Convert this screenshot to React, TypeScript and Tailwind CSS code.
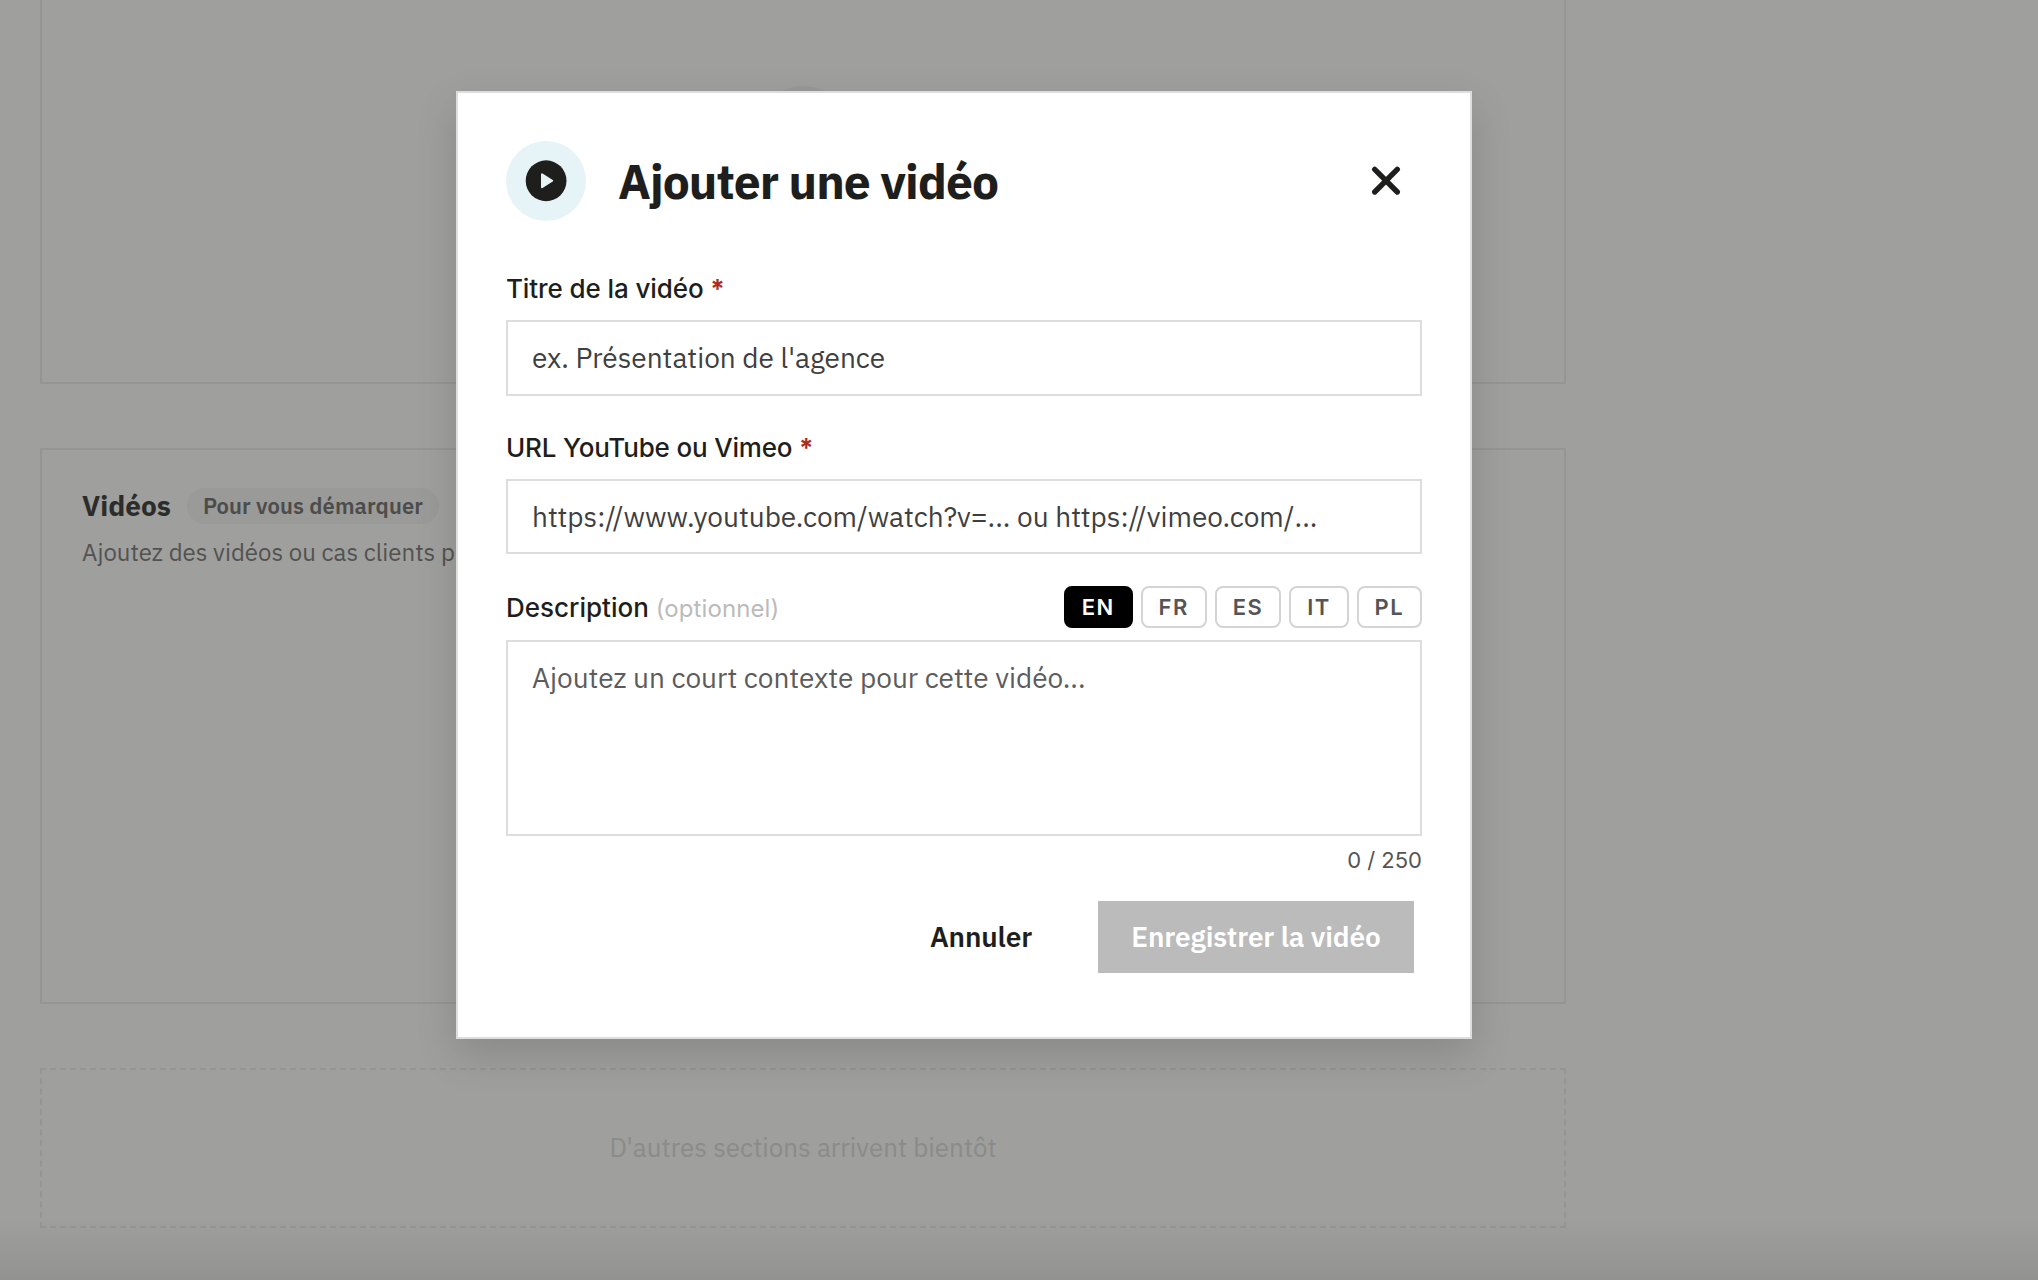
import React, { useState } from "react";

const languages = ["EN", "FR", "ES", "IT", "PL"];

const MAX_LENGTH = 250;

const PlayIcon = () => (
  <svg width="48" height="48" viewBox="0 0 48 48" aria-hidden="true">
    <circle cx="24.1" cy="23.75" r="20.4" fill="#1e1e1c" />
    <path
      d="M20 17.3v12.9l10.2-6.45z"
      fill="#e6f4f8"
      stroke="#e6f4f8"
      strokeWidth="2"
      strokeLinejoin="round"
    />
  </svg>
);

const CloseIcon = () => (
  <svg width="48" height="48" viewBox="0 0 48 48" aria-hidden="true">
    <path
      d="M12.7 12.4l22.6 22.6M35.3 12.4l-22.6 22.6"
      fill="none"
      stroke="#1e1e1c"
      strokeWidth="5.4"
      strokeLinecap="round"
    />
  </svg>
);

const Label = ({ children }: { children: React.ReactNode }) => (
  <label className="block font-['Inter',sans-serif] text-[26px] leading-9 font-medium text-[#1e1e1c]">
    {children}
  </label>
);

const Required = () => <span className="font-bold text-[#b02a22]">*</span>;

const PageSections = () => (
  <div className="flex w-[1566px] flex-col pl-10">
    <section className="flex h-96 justify-center border-2 border-t-0 border-[#959593]">
      <div className="mt-[86px] size-24 rounded-full bg-[#999997]" />
    </section>

    <section className="mt-16 h-[556px] border-2 border-[#959593] pt-[38px] pl-10">
      <div className="flex items-center gap-4">
        <h3 className="text-[28px] leading-9 font-bold text-[#2c2c2a]">Vidéos</h3>
        <span className="rounded-full bg-[#9a9a98] px-4 text-[22px] leading-9 font-semibold tracking-[0.08px] text-[#4c4c4b]">
          Pour vous démarquer
        </span>
      </div>
      <p className="mt-2.5 text-2xl leading-9 text-[#525251]">
        Ajoutez des vidéos ou cas clients p
      </p>
    </section>

    <section className="mt-16 flex h-40 items-center justify-center border-2 border-dashed border-[#959593] pb-0.5">
      <p className="text-[26px] text-[#8b8b89]">D'autres sections arrivent bientôt</p>
    </section>
  </div>
);

const VideoModal = () => {
  const [activeLanguage, setActiveLanguage] = useState("EN");
  const [description, setDescription] = useState("");

  return (
    <div
      role="dialog"
      className="h-[948px] w-[1016px] border-2 border-[#dddddd] bg-white px-12 pt-12 shadow-[0_16px_40px_rgba(0,0,0,0.14)]"
    >
      <div className="flex items-center">
        <div className="flex size-20 items-center justify-center rounded-full bg-[#e6f4f8]">
          <PlayIcon />
        </div>
        <h2 className="ml-8 text-5xl font-bold tracking-[-0.96px] text-[#1e1e1c]">
          Ajouter une vidéo
        </h2>
        <button className="mr-3 ml-auto" aria-label="Fermer">
          <CloseIcon />
        </button>
      </div>

      <div className="mt-[50px] tracking-[-0.1px]">
        <Label>
          Titre de la vidéo <Required />
        </Label>
        <input
          className="mt-[13px] block h-[76px] w-full border-2 border-[#dddddd] px-6 pb-0.5 text-[28px] tracking-normal text-[#3f3f3f] placeholder:text-[#3f3f3f]"
          placeholder="ex. Présentation de l'agence"
        />
      </div>

      <div className="mt-[34px] tracking-[-0.18px]">
        <Label>
          URL YouTube ou Vimeo <Required />
        </Label>
        <input
          className="mt-[13px] block h-[75px] w-full border-2 border-[#dddddd] px-6 text-[28px] tracking-normal text-[#3f3f3f] placeholder:text-[#3f3f3f]"
          placeholder="https://www.youtube.com/watch?v=... ou https://vimeo.com/..."
        />
      </div>

      <div className="mt-8 flex items-center justify-between">
        <div className="pt-0.5">
          <Label>
            Description{" "}
            <span className="text-2xl font-normal tracking-[0.1px] text-[#bbbbbb]">(optionnel)</span>
          </Label>
        </div>
        <div className="flex gap-2">
          {languages.map((language) => (
            <button
              key={language}
              onClick={() => setActiveLanguage(language)}
              className={`h-[42px] rounded-lg border-2 px-4 font-['Inter',sans-serif] text-[22px] leading-[38px] font-semibold tracking-[1.4px] ${
                activeLanguage === language
                  ? "border-black bg-black text-white"
                  : "border-[#d4d4d4] bg-white text-[#555555]"
              }`}
            >
              {language}
            </button>
          ))}
        </div>
      </div>
      <textarea
        className="mt-3 block h-[196px] w-full resize-none border-2 border-[#dddddd] px-6 pt-3.5 text-[28px] leading-[43px] text-[#3f3f3f] placeholder:text-[#5c5c5c]"
        placeholder="Ajoutez un court contexte pour cette vidéo..."
        maxLength={MAX_LENGTH}
        value={description}
        onChange={(e) => setDescription(e.target.value)}
      />
      <p className="mt-2 text-right font-['Inter',sans-serif] text-[22px] leading-8 text-[#555555]">
        {description.length} / {MAX_LENGTH}
      </p>

      <div className="mt-[25px] mr-2 flex items-center justify-end gap-[34px] text-[28px] font-semibold tracking-[-0.14px]">
        <button className="h-[72px] px-8 text-[#1e1e1c]">Annuler</button>
        <button className="h-[72px] w-[316px] bg-[#bbbbbb] text-white" disabled>
          Enregistrer la vidéo
        </button>
      </div>
    </div>
  );
};

export default function App() {
  return (
    <div className="relative h-[1280px] w-[2038px] overflow-hidden bg-[#9f9f9d] font-['IBM_Plex_Sans','Roboto',sans-serif]">
      <PageSections />
      <div className="absolute inset-x-0 bottom-0 h-16 bg-linear-to-b from-transparent to-black/8" />
      <div className="absolute top-[91px] left-[456px]">
        <VideoModal />
      </div>
    </div>
  );
}
